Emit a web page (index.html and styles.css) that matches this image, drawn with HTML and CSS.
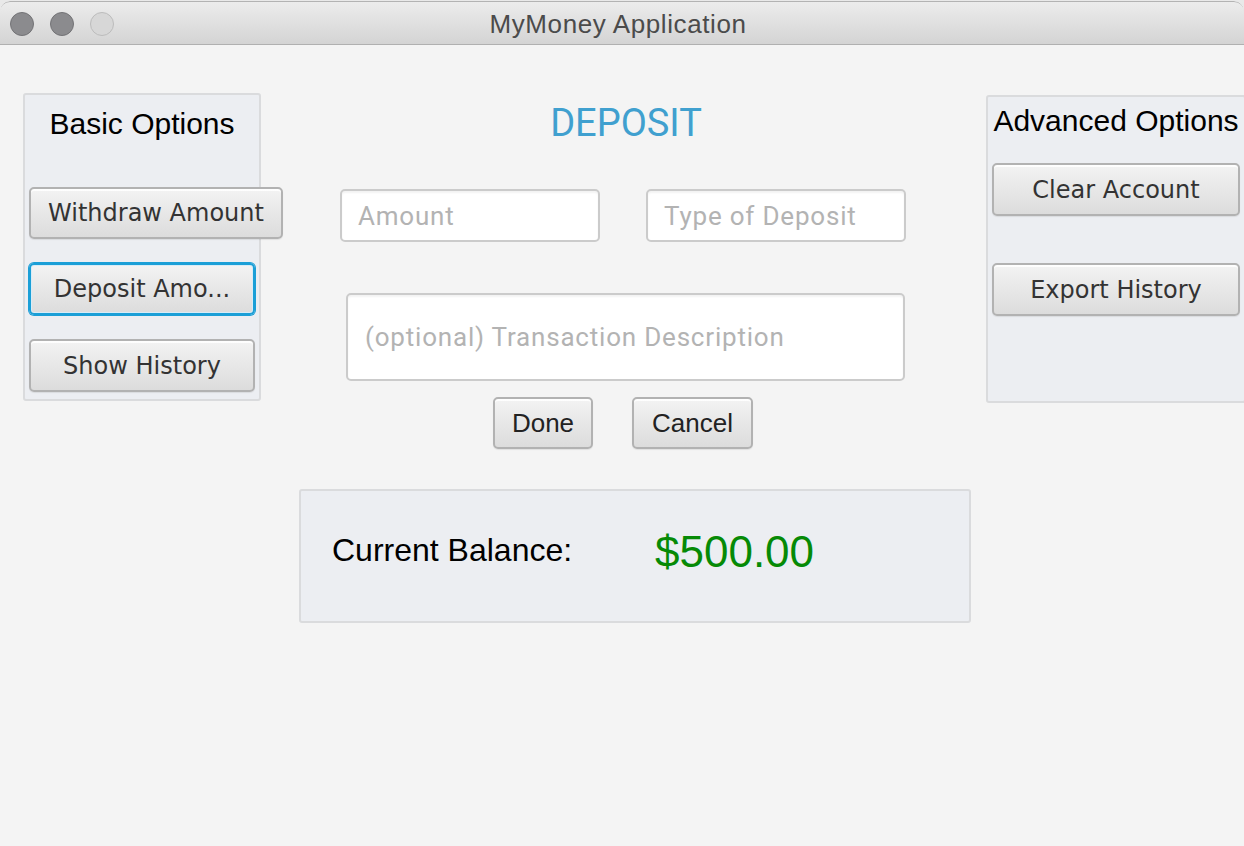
FILE: index.html
```html
<!DOCTYPE html>
<html lang="en">
<head>
<meta charset="utf-8">
<title>MyMoney Application</title>
<link rel="stylesheet" href="styles.css">
</head>
<body>
<div class="window">
  <header class="titlebar">
    <div class="lights">
      <span class="light dark"></span>
      <span class="light dark"></span>
      <span class="light off"></span>
    </div>
    <div class="title">MyMoney Application</div>
    <div class="spacer"></div>
  </header>
  <main class="content">
    <div class="top-row">
      <section class="panel basic">
        <h2 class="panel-title">Basic Options</h2>
        <div class="btn withdraw">Withdraw Amount</div>
        <div class="btn deposit focused">Deposit Amo...</div>
        <div class="btn history">Show History</div>
      </section>
      <section class="center">
        <h1 class="form-title">DEPOSIT</h1>
        <div class="fields">
          <div class="field"><span class="placeholder">Amount</span></div>
          <div class="field"><span class="placeholder">Type of Deposit</span></div>
        </div>
        <div class="field description"><span class="placeholder">(optional) Transaction Description</span></div>
        <div class="actions">
          <div class="btn action done">Done</div>
          <div class="btn action cancel">Cancel</div>
        </div>
      </section>
      <section class="panel advanced">
        <h2 class="panel-title">Advanced Options</h2>
        <div class="btn adv clear">Clear Account</div>
        <div class="btn adv export">Export History</div>
      </section>
    </div>
    <div class="balance">
      <span class="balance-label">Current Balance:</span>
      <span class="balance-value">$500.00</span>
    </div>
  </main>
</div>
</body>
</html>
```

FILE: styles.css
```css
* { box-sizing: border-box; }

html, body {
  margin: 0;
  padding: 0;
}

body {
  width: 1244px;
  height: 846px;
  overflow: hidden;
  background: #e9e9e9;
  font-family: "Liberation Sans", Arial, sans-serif;
}

.window {
  margin-top: 1px;
  height: 845px;
  background: #f4f4f4;
  border-radius: 10px 10px 0 0;
  overflow: hidden;
}

/* Title bar */
.titlebar {
  height: 44px;
  border-top: 1px solid #b3b3b3;
  border-bottom: 1px solid #b0b0b0;
  border-radius: 10px 10px 0 0;
  background: linear-gradient(to bottom, #ececec, #d4d4d4);
  display: grid;
  grid-template-columns: 1fr auto 1fr;
  align-items: center;
  padding-top: 2px;
}

.lights {
  display: flex;
  gap: 16px;
  padding-left: 10px;
}

.light {
  width: 24px;
  height: 24px;
  border-radius: 50%;
}

.light.dark {
  background: #8b8b8e;
  border: 1px solid #737376;
}

.light.off {
  background: #d7d7d7;
  border: 1px solid #bcbcbc;
}

.title {
  font-size: 26px;
  letter-spacing: 0.6px;
  color: #4b4b4b;
  margin-right: 8px;
  line-height: 30px;
}

/* Content */
.content {
  display: flex;
  flex-direction: column;
}

.top-row {
  display: flex;
  align-items: flex-start;
}

.panel {
  background: #eceef2;
  border: 2px solid #dadbdd;
  border-radius: 3px;
  display: flex;
  flex-direction: column;
  height: 308px;
}

.panel-title {
  margin: 0;
  font-weight: normal;
  font-size: 30px;
  line-height: 34px;
  color: #000;
  text-align: center;
  white-space: nowrap;
  align-self: stretch;
}

.basic {
  margin-left: 23px;
  margin-top: 48px;
  width: 238px;
  flex: 0 0 238px;
  padding-top: 12px;
  align-items: flex-start;
}

.advanced {
  margin-top: 50px;
  width: 260px;
  flex: 0 0 260px;
  padding-top: 7px;
  align-items: center;
}

/* Buttons */
.btn {
  display: flex;
  align-items: center;
  justify-content: center;
  font-family: "DejaVu Sans", sans-serif;
  font-size: 24px;
  color: #333;
  white-space: nowrap;
  background: linear-gradient(to bottom, #f3f3f3, #dcdcdc);
  border: 2px solid #b2b2b2;
  border-radius: 5px;
  box-shadow: inset 0 2px 0 rgba(255,255,255,0.85), 0 1px 1px rgba(0,0,0,0.08);
}

.basic .btn {
  margin-left: 4px;
  height: 52px;
  width: 226px;
}

.basic .withdraw {
  width: 254px;
  margin-top: 46px;
}

.basic .deposit,
.basic .history {
  margin-top: 24px;
}

.basic .history {
  height: 53px;
}

.btn.focused {
  border-color: #1b9fd7;
  box-shadow: 0 0 0 1px #1b9fd7, inset 0 0 0 1px #d8ecf7;
}

.advanced .btn {
  width: 248px;
  height: 53px;
}

.advanced .clear {
  margin-top: 25px;
}

.advanced .export {
  margin-top: 47px;
}

/* Center form */
.center {
  flex: 0 0 725px;
  display: flex;
  flex-direction: column;
}

.form-title {
  margin: 56px 0 0 0;
  padding-left: 5px;
  font-family: Roboto, "Liberation Sans", sans-serif;
  font-weight: normal;
  font-size: 38px;
  line-height: 44px;
  color: #40a0cf;
  text-align: center;
}

.fields {
  display: flex;
  gap: 46px;
  margin-top: 44px;
  padding-left: 79px;
}

.field {
  width: 260px;
  height: 53px;
  background: #fff;
  border: 2px solid #cbcbcb;
  border-radius: 5px;
  box-shadow: inset 0 2px 2px rgba(0,0,0,0.05);
  display: flex;
  align-items: center;
  padding-left: 16px;
}

.placeholder {
  font-family: Roboto, "Liberation Sans", sans-serif;
  font-size: 26px;
  letter-spacing: 0.8px;
  color: #b3b3b3;
  white-space: nowrap;
}

.field.description {
  margin-top: 51px;
  margin-left: 85px;
  width: 559px;
  height: 88px;
  padding-left: 17px;
}

.actions {
  display: flex;
  gap: 39px;
  margin-top: 16px;
  margin-left: 232px;
}

.btn.action {
  height: 52px;
  font-family: "Liberation Sans", Arial, sans-serif;
  font-size: 26px;
  color: #222;
}

.btn.done { width: 100px; }
.btn.cancel { width: 121px; }

/* Balance */
.balance {
  margin-top: 40px;
  margin-left: 299px;
  width: 672px;
  height: 134px;
  background: #eceef2;
  border: 2px solid #dadbdd;
  border-radius: 3px;
  display: flex;
  align-items: center;
  padding-left: 31px;
  padding-bottom: 12px;
}

.balance-label {
  flex: 0 0 323px;
  font-size: 32px;
  color: #000;
}

.balance-value {
  font-size: 44px;
  color: #068a06;
  margin-top: 3px;
}
```
